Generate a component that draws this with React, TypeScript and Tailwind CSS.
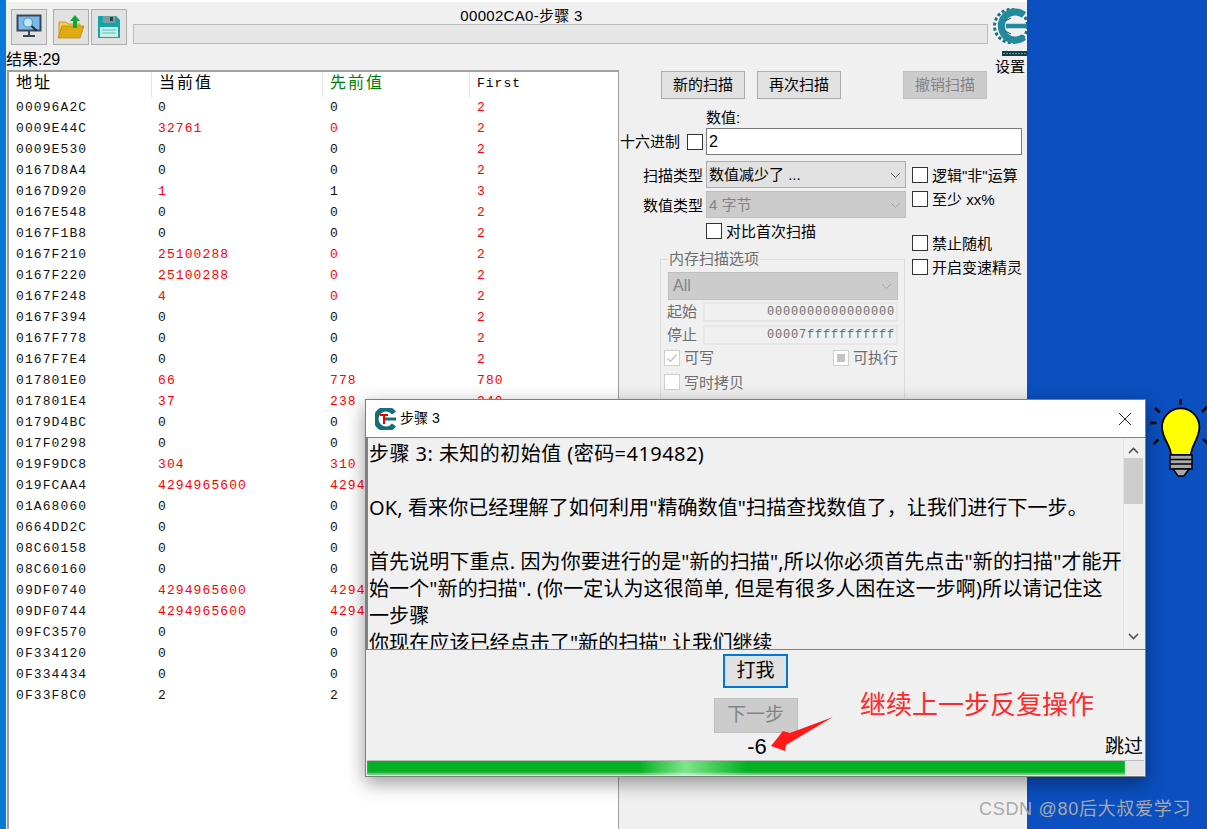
import React from "react";

type Row = [string, string, string, string, number];
// last number: bitmask of red columns (1 current, 2 previous, 4 first)
const rows: Row[] = [
  ["00096A2C", "0", "0", "2", 4],
  ["0009E44C", "32761", "0", "2", 7],
  ["0009E530", "0", "0", "2", 4],
  ["0167D8A4", "0", "0", "2", 4],
  ["0167D920", "1", "1", "3", 5],
  ["0167E548", "0", "0", "2", 4],
  ["0167F1B8", "0", "0", "2", 4],
  ["0167F210", "25100288", "0", "2", 7],
  ["0167F220", "25100288", "0", "2", 7],
  ["0167F248", "4", "0", "2", 7],
  ["0167F394", "0", "0", "2", 4],
  ["0167F778", "0", "0", "2", 4],
  ["0167F7E4", "0", "0", "2", 4],
  ["017801E0", "66", "778", "780", 7],
  ["017801E4", "37", "238", "240", 7],
  ["0179D4BC", "0", "0", "2", 4],
  ["017F0298", "0", "0", "2", 4],
  ["019F9DC8", "304", "310", "312", 7],
  ["019FCAA4", "4294965600", "4294965602", "4294965604", 7],
  ["01A68060", "0", "0", "2", 4],
  ["0664DD2C", "0", "0", "2", 4],
  ["08C60158", "0", "0", "2", 4],
  ["08C60160", "0", "0", "2", 4],
  ["09DF0740", "4294965600", "4294965602", "4294965604", 7],
  ["09DF0744", "4294965600", "4294965602", "4294965604", 7],
  ["09FC3570", "0", "0", "2", 4],
  ["0F334120", "0", "0", "2", 4],
  ["0F334434", "0", "0", "2", 4],
  ["0F33F8C0", "2", "2", "2", 0],
];

const memoLines = [
  "\u00a0",
  'OK, 看来你已经理解了如何利用"精确数值"扫描查找数值了，让我们进行下一步。',
  "\u00a0",
  '首先说明下重点. 因为你要进行的是"新的扫描",所以你必须首先点击"新的扫描"才能开',
  '始一个"新的扫描". (你一定认为这很简单, 但是有很多人困在这一步啊)所以请记住这',
  "一步骤",
  '你现在应该已经点击了"新的扫描" 让我们继续',
];

function Chevron({ color = "#606060" }: { color?: string }) {
  return (
    <svg width="11" height="7" viewBox="0 0 11 7" fill="none">
      <path d="M1 1l4.5 4.5L10 1" stroke={color} strokeWidth="1" />
    </svg>
  );
}

function Check({ label, disabled }: { label: string; disabled?: boolean }) {
  return (
    <div className="flex h-[16px] items-center gap-[4px]">
      <span className={`block h-[16px] w-[16px] shrink-0 border bg-white ${disabled ? "border-[#cfcfcf]" : "border-[#333333]"}`} />
      <span className={`whitespace-nowrap pt-[2px] text-[15px] leading-[16px] ${disabled ? "text-[#6d6d6d]" : "text-black"}`}>{label}</span>
    </div>
  );
}

function ToolButton({ children }: { children: React.ReactNode }) {
  return (
    <div className="flex h-[36px] w-[36px] shrink-0 items-center justify-center border border-[#adadad] bg-[#e1e1e1]">{children}</div>
  );
}

function ScanButton({ label, disabled }: { label: string; disabled?: boolean }) {
  return (
    <div
      className={`flex h-[28px] w-[84px] items-center justify-center border pt-px text-[15px] ${
        disabled ? "border-[#bfbfbf] bg-[#cccccc] text-[#838383]" : "border-[#adadad] bg-[#e1e1e1] text-black"
      }`}
    >
      {label}
    </div>
  );
}

function Logo() {
  return (
    <svg className="block" width="34" height="53" viewBox="0 0 34 53" fill="none">
      <circle cx="18" cy="22" r="16.5" stroke="#1b6f80" strokeWidth="3" strokeDasharray="3 2.2" />
      <path d="M31 11A14 14 0 1 0 31 33" stroke="#23899c" strokeWidth="7" />
      <path d="M13 22H34" stroke="#23899c" strokeWidth="4.5" />
      <path d="M12 17l6-3M12 27l6 3" stroke="#14596a" strokeWidth="1" />
      <rect x="9" y="47" width="25" height="5" fill="#123f4c" />
      <path d="M10 49.5H34" stroke="#5f97a3" strokeWidth="1" strokeDasharray="2 1" />
    </svg>
  );
}

export default function App() {
  return (
    <div className="relative flex h-[829px] w-[1207px] overflow-hidden bg-[#0b4fc0] font-['Liberation_Sans','Noto_Sans_CJK_SC',sans-serif] text-black">
      <div className="w-[6px] shrink-0 bg-[#0a78d8]" />

      {/* main window */}
      <div className="flex h-full w-[1021px] shrink-0 flex-col overflow-hidden border-t-2 border-white bg-[#f0f0f0]">
        {/* header */}
        <div className="flex h-[68px] shrink-0">
          <div className="flex min-w-0 flex-1 flex-col">
            <div className="flex pl-[5px] pr-[5px] pt-[7px]">
              <ToolButton>
                <svg width="28" height="26" viewBox="0 0 28 26" fill="none">
                  <rect x="2.5" y="1.5" width="23" height="15" fill="#7db9ea" stroke="#37485a" strokeWidth="2" />
                  <path d="M14 17v4M8 22h12" stroke="#37485a" strokeWidth="2" />
                  <circle cx="13" cy="8.5" r="4.6" fill="#bfe5f7" stroke="#5d9fc7" strokeWidth="1.4" />
                  <path d="M16.5 12l5 4.5" stroke="#1f2f3f" strokeWidth="2" />
                </svg>
              </ToolButton>
              <div className="ml-[6px]">
                <ToolButton>
                  <svg width="28" height="26" viewBox="0 0 28 26" fill="none">
                    <path d="M2 21V8h7l2 2h12v11z" fill="#f5cf55" stroke="#b88a10" strokeWidth="0.8" />
                    <path d="M1 24l4-12h22l-4 12z" fill="#e0aa10" stroke="#b88a10" strokeWidth="0.8" />
                    <path d="M18 1l5 6h-3v7h-4V7h-3z" fill="#12a63a" />
                  </svg>
                </ToolButton>
              </div>
              <div className="ml-[2px]">
                <ToolButton>
                  <svg width="24" height="24" viewBox="0 0 24 24" fill="none">
                    <path d="M1 1h18l4 4v18H1z" fill="#16a3a8" />
                    <rect x="6" y="1" width="12" height="7" fill="#7b9ea0" />
                    <rect x="13" y="2" width="3" height="4" fill="#2c4044" />
                    <rect x="3" y="12" width="18" height="10" fill="#c9f1ec" />
                    <path d="M5 15h14M5 18h14" stroke="#62b9b5" strokeWidth="1" />
                  </svg>
                </ToolButton>
              </div>
              <div className="ml-[6px] flex min-w-0 flex-1 flex-col">
                <div className="h-[15px] pr-[78px] text-center text-[15px] leading-[13px] tracking-[0.3px]">00002CA0-步骤 3</div>
                <div className="h-[20px] border border-[#bcbcbc] bg-[#e6e6e6]" />
              </div>
            </div>
            <div className="mt-[6px] text-[16px] leading-[18px]">结果:29</div>
          </div>
          <div className="w-[34px] shrink-0 pt-[2px]">
            <Logo />
            <div className="ml-[2px] mt-[2px] whitespace-nowrap text-[15px] leading-[16px]">设置</div>
          </div>
        </div>

        {/* content */}
        <div className="flex min-h-0 flex-1">
          {/* list */}
          <div className="ml-[1px] flex w-[612px] shrink-0 flex-col border-l-2 border-r border-t-2 border-l-[#a0a0a0] border-r-[#a0a0a0] border-t-[#a0a0a0] bg-white font-['Liberation_Mono','Noto_Sans_CJK_SC',monospace]">
            <div className="grid h-[25px] shrink-0 grid-cols-[142px_171px_147px_1fr] items-center text-[16px] tracking-[2px]">
              <div className="h-full pl-[7px] leading-[24px]">地址</div>
              <div className="h-full border-l border-[#e5e5e5] pl-[7px] leading-[24px]">当前值</div>
              <div className="h-full border-l border-[#e5e5e5] pl-[7px] leading-[24px] text-[#008000]">先前值</div>
              <div className="h-full border-l border-[#e5e5e5] pl-[7px] text-[13px] leading-[24px] tracking-[1px]">First</div>
            </div>
            {rows.map((r) => (
              <div key={r[0]} className="grid h-[21px] shrink-0 grid-cols-[142px_171px_147px_1fr] items-center text-[13px] leading-[21px] tracking-[1.1px] text-[#111111]">
                <div className="pl-[7px]">{r[0]}</div>
                <div className={`pl-[7px] ${r[4] & 1 ? "text-[#ff0000]" : ""}`}>{r[1]}</div>
                <div className={`pl-[8px] ${r[4] & 2 ? "text-[#ff0000]" : ""}`}>{r[2]}</div>
                <div className={`pl-[8px] ${r[4] & 4 ? "text-[#ff0000]" : ""}`}>{r[3]}</div>
              </div>
            ))}
          </div>

          {/* right panel */}
          <div className="flex min-w-0 flex-1 flex-col">
            <div className="ml-[42px] mt-[1px] flex">
              <ScanButton label="新的扫描" />
              <div className="ml-[12px]"><ScanButton label="再次扫描" /></div>
              <div className="ml-[62px]"><ScanButton label="撤销扫描" disabled /></div>
            </div>
            <div className="ml-[87px] mt-[11px] h-[18px] text-[15px] leading-[16px]">数值:</div>
            <div className="flex h-[27px] items-center">
              <span className="ml-[1px] w-[60px] whitespace-nowrap pt-[2px] text-[15px]">十六进制</span>
              <span className="ml-[7px] block h-[16px] w-[16px] shrink-0 border border-[#333333] bg-white" />
              <div className="ml-[3px] flex h-[27px] w-[316px] items-center border border-[#7a7a7a] bg-white pl-[2px] text-[16px]">2</div>
            </div>
            <div className="flex min-h-0 flex-1">
              <div className="flex w-[287px] shrink-0 flex-col pt-[6px]">
                <div className="flex items-center">
                  <span className="w-[84px] pt-[3px] text-right text-[15px]">扫描类型</span>
                  <div className="ml-[3px] flex h-[27px] w-[200px] items-center justify-between border border-[#adadad] bg-[#e1e1e1] pl-[2px] pr-[4px] pt-[2px] text-[15px]">
                    <span>数值减少了 ...</span>
                    <Chevron />
                  </div>
                </div>
                <div className="mt-[3px] flex items-center">
                  <span className="w-[84px] pt-[3px] text-right text-[15px]">数值类型</span>
                  <div className="ml-[3px] flex h-[27px] w-[200px] items-center justify-between border border-[#bfbfbf] bg-[#cccccc] pl-[2px] pr-[4px] pt-[2px] text-[15px] text-[#838383]">
                    <span>4 字节</span>
                    <Chevron color="#a5a5a5" />
                  </div>
                </div>
                <div className="ml-[87px] mt-[5px]"><Check label="对比首次扫描" /></div>

                <div className="relative ml-[41px] mt-[20px] h-[160px] w-[245px] border border-[#dcdcdc] pl-[7px] pr-[6px] pt-[12px]">
                  <span className="absolute -top-[9px] left-[7px] bg-[#f0f0f0] px-px text-[15px] leading-[16px] text-[#6d6d6d]">内存扫描选项</span>
                  <div className="flex h-[28px] w-[230px] items-center justify-between border border-[#bfbfbf] bg-[#cccccc] pl-[4px] pr-[5px] text-[16px] text-[#838383]">
                    <span>All</span>
                    <Chevron color="#a5a5a5" />
                  </div>
                  <div className="mt-[2px] flex h-[20px] items-center">
                    <span className="-ml-px w-[36px] text-[15px] leading-[20px] text-[#6d6d6d]">起始</span>
                    <div className="flex h-[20px] w-[195px] items-center justify-end border-2 border-[#e6e6e6] pr-[1px] font-['Liberation_Mono',monospace] text-[12px] tracking-[0.8px] text-[#6d6d6d]">0000000000000000</div>
                  </div>
                  <div className="mt-[3px] flex h-[20px] items-center">
                    <span className="-ml-px w-[36px] text-[15px] leading-[20px] text-[#6d6d6d]">停止</span>
                    <div className="flex h-[20px] w-[195px] items-center justify-end border-2 border-[#e6e6e6] pr-[1px] font-['Liberation_Mono',monospace] text-[12px] tracking-[0.8px] text-[#6d6d6d]">00007fffffffffff</div>
                  </div>
                  <div className="-ml-[4px] mt-[5px] flex h-[16px] w-[234px] items-center justify-between">
                    <div className="flex items-center gap-[4px]">
                      <span className="flex h-[16px] w-[16px] items-center justify-center border border-[#cfcfcf] bg-white">
                        <svg width="12" height="12" viewBox="0 0 12 12" fill="none"><path d="M1.5 6.5l3 3 6-7" stroke="#c4c4c4" strokeWidth="1.5" /></svg>
                      </span>
                      <span className="text-[15px] leading-[16px] text-[#6d6d6d]">可写</span>
                    </div>
                    <div className="flex items-center gap-[4px]">
                      <span className="flex h-[16px] w-[16px] items-center justify-center border border-[#cfcfcf] bg-white">
                        <span className="block h-[8px] w-[8px] bg-[#c4c4c4]" />
                      </span>
                      <span className="text-[15px] leading-[16px] text-[#6d6d6d]">可执行</span>
                    </div>
                  </div>
                  <div className="-ml-[4px] mt-[8px]"><Check label="写时拷贝" disabled /></div>
                </div>
              </div>
              <div className="flex flex-1 flex-col pl-[6px] pt-[12px]">
                <Check label={'逻辑"非"运算'} />
                <div className="mt-[8px]"><Check label="至少 xx%" /></div>
                <div className="mt-[28px]"><Check label="禁止随机" /></div>
                <div className="mt-[8px]"><Check label="开启变速精灵" /></div>
              </div>
            </div>
          </div>
        </div>
      </div>

      {/* tutorial dialog, floating window */}
      <div className="absolute left-[365px] top-[399px] flex h-[378px] w-[781px] flex-col border border-[#7f7f7f] bg-[#f0f0f0] shadow-[0_6px_18px_rgba(0,0,0,0.4)]">
        <div className="flex h-[37px] shrink-0 items-center bg-white pl-[9px] pr-[13px]">
          <svg width="22" height="22" viewBox="0 0 22 22" fill="none">
            <path d="M19 5A10 10 0 1 0 19 17" stroke="#136f78" strokeWidth="5" />
            <path d="M8 11H21" stroke="#136f78" strokeWidth="3" />
            <path d="M5 7H13M9 7V16" stroke="#f00000" strokeWidth="2" />
          </svg>
          <span className="ml-[3px] text-[14px]">步骤 3</span>
          <svg className="ml-auto" width="14" height="14" viewBox="0 0 14 14" fill="none">
            <path d="M1 1l12 12M13 1L1 13" stroke="#222222" strokeWidth="1" />
          </svg>
        </div>
        <div className="flex h-[213px] shrink-0 border-b border-l-2 border-t border-[#808080] border-r-0">
          <div className="min-w-0 flex-1 overflow-hidden pl-[1px] pt-[2px] font-['Noto_Sans','Noto_Sans_CJK_SC',sans-serif] text-[20px] leading-[27px] tracking-[0.1px]">
            <div className="whitespace-nowrap tracking-[0.45px]">步骤 3: 未知的初始值 (密码=419482)</div>
            {memoLines.map((l, i) => (
              <div key={i} className="whitespace-nowrap">{l}</div>
            ))}
          </div>
          <div className="mr-[2px] flex w-[20px] shrink-0 flex-col items-center border-l border-[#e4e4e4] bg-[#f0f0f0]">
            <svg className="mt-[9px]" width="11" height="7" viewBox="0 0 11 7" fill="none"><path d="M1 6l4.5-4.5L10 6" stroke="#505050" strokeWidth="1.6" /></svg>
            <div className="mt-[4px] h-[46px] w-full bg-[#cdcdcd]" />
            <svg className="mb-[9px] mt-auto" width="11" height="7" viewBox="0 0 11 7" fill="none"><path d="M1 1l4.5 4.5L10 1" stroke="#505050" strokeWidth="1.6" /></svg>
          </div>
        </div>
        <div className="flex min-h-0 flex-1 flex-col items-center pt-[4px]">
          <div className="flex h-[34px] w-[65px] items-center justify-center border-2 border-[#0078d7] bg-[#e1e1e1] text-[19px]">打我</div>
          <div className="mt-[10px] flex h-[36px] w-[84px] items-center justify-center border border-[#bfbfbf] bg-[#cccccc] text-[19px] text-[#838383]">下一步</div>
          <div className="grid h-[27px] w-full grid-cols-[1fr_auto_1fr] items-center">
            <span />
            <span className="pl-[3px] text-[22px] leading-[27px]">-6</span>
            <span className="pr-[2px] text-right text-[19px] leading-[23px]">跳过</span>
          </div>
        </div>
        <div className="mx-px mb-px h-[15px] shrink-0 border-t border-[#bcbcbc] bg-[#e6e6e6]">
          <div className="h-full w-[758px] bg-[linear-gradient(90deg,#06b025_0%,#06b025_36%,#7fe58c_42%,#06b025_50%,#06b025_100%)] shadow-[inset_0_-2px_2px_rgba(255,255,255,0.45)]" />
        </div>
      </div>

      {/* light bulb hint */}
      <svg className="absolute left-[1147px] top-[397px]" width="60" height="82" viewBox="0 0 60 82" fill="none">
        <g stroke="#0a0a0a" strokeWidth="2.5">
          <path d="M33.5 2v6M3 26h6.5M8 11l5 4.5M6.5 47l5-4.5M60 10l-5 5M56 42l5 4.5" />
        </g>
        <path d="M24 58C24 48 15 42 15 30A18.7 18.7 0 0 1 52.4 30C52.4 42 44 48 44 58Z" fill="#ffff00" stroke="#000000" strokeWidth="1.8" />
        <rect x="23" y="58" width="22" height="14" fill="#a8a8a8" stroke="#000000" strokeWidth="1.5" />
        <path d="M23 62.5H45M23 67H45" stroke="#000000" strokeWidth="1.5" />
        <path d="M26 72H42L37 79H31Z" fill="#a8a8a8" stroke="#000000" strokeWidth="1.5" />
      </svg>

      {/* annotation */}
      <span className="absolute left-[860px] top-[689px] whitespace-nowrap text-[26px] leading-[32px] text-[#ff2a2a]">继续上一步反复操作</span>
      <svg className="absolute left-[770px] top-[716px]" width="64" height="37" viewBox="0 0 64 37" fill="none">
        <path d="M63 1L20 17 13 15 1 30 15 35 16 29Z" fill="#ff1a1a" />
      </svg>

      {/* watermark */}
      <span className="absolute left-[979px] top-[798px] whitespace-nowrap text-[18px] leading-[22px] tracking-[0.7px] text-[#a9a9a9]">CSDN @80后大叔爱学习</span>
    </div>
  );
}
